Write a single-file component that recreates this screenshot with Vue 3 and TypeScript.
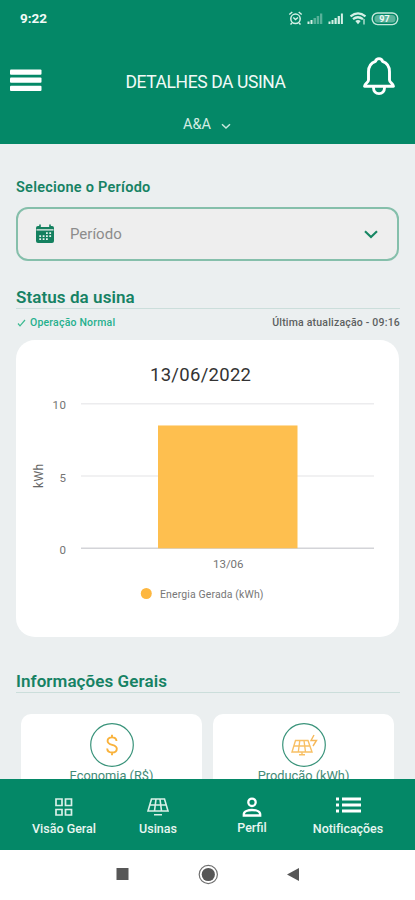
<script setup lang="ts">
interface Reading {
  label: string
  value: number
}

const reading: Reading = { label: '13/06', value: 8.5 }
const ticks: number[] = [10, 5, 0]
const plot = { left: 65, right: 358, top: 63.8, bottom: 208.3, max: 10 }

const yFor = (value: number): number =>
  plot.bottom - (value / plot.max) * (plot.bottom - plot.top)
</script>

<template>
  <div class="screen">
    <header class="header">
      <div class="status-bar">
        <span class="clock">9:22</span>
        <svg class="status-icons" width="112" height="18" viewBox="0 0 112 18">
          <g fill="none" stroke="#d5f0e6" stroke-width="1.5">
            <circle cx="7.5" cy="9.800" r="4.700" />
            <path d="M5.300 8.500 7.500 10.500 10 8.500M1.300 5.500 4.300 3M13.700 5.500 10.700 3M4 14l-1.500 1.500M11 14l1.500 1.500" />
          </g>
          <g fill="#d5f0e6">
            <path d="M19.500 12.500h2V15h-2zM22.500 11h2v4h-2z" />
            <path opacity=".4" d="M25.500 9h2.500v6h-2.500zM28.700 7h2.500v8h-2.500zM32 4.500h2.300V15H32z" />
            <path d="M40.500 12.500h2V15h-2zM43.500 11h2v4h-2zM46.500 9h2.200v6h-2.200zM49.700 7h2.200v8h-2.200zM52.900 4.500h2V15h-2z" />
          </g>
          <g fill="none" stroke="#d5f0e6" stroke-width="2.200">
            <path d="M62.500 7.300q7.500-6 15 0M65 10.200q4.800-3.900 10 0" />
            <path d="m67.300 12 2.700 3.300 2.700-3.300q-2.700-1.800-5.400 0z" fill="#d5f0e6" stroke="none" />
            <path d="M76 10v5.500" stroke-width="1.200" />
          </g>
          <rect x="84.200" y="4" width="25.500" height="11.600" rx="5.500" fill="none" stroke="#c5e8dc" stroke-width="1.400" />
          <rect x="86.500" y="6.100" width="21" height="7.400" rx="3.500" fill="#c5e8dc" opacity=".45" />
          <text x="96.500" y="13.100" class="battery">97</text>
        </svg>
      </div>
      <div class="title-row">
        <svg width="32" height="24" viewBox="0 0 32 24" fill="#fff">
          <rect y="1.500" width="31.500" height="5.200" rx="1" />
          <rect y="9.600" width="31.500" height="5.200" rx="1" />
          <rect y="17.700" width="31.500" height="5.200" rx="1" />
        </svg>
        <h1>DETALHES DA USINA</h1>
        <svg width="32" height="39" viewBox="1 0 32 40" preserveAspectRatio="none" fill="none" stroke="#fff" stroke-width="2.900" stroke-linejoin="round" stroke-linecap="round">
          <path d="M13.500 4.500a3.600 3.600 0 0 1 7 0c4.800 1.700 7 5.500 7 10.700v8.300c0 2.700 4 4.200 4 6.500H2.500c0-2.300 4-3.800 4-6.500v-8.300c0-5.200 2.200-9 7-10.700z" />
          <path d="M11.500 31.500c0 3.700 2.300 6 5.500 6s5.500-2.300 5.500-6" />
        </svg>
      </div>
      <div class="plant">
        <span>A&amp;A</span>
        <svg width="10" height="7" viewBox="0 0 10 7" fill="none" stroke="#c9e8dd" stroke-width="1.500"><path d="m1 1.300 4 3.700 4-3.700" /></svg>
      </div>
    </header>

    <main class="content">
      <h2 class="label">Selecione o Período</h2>
      <div class="field">
        <svg width="20" height="20" viewBox="0 0 20 20">
          <path fill="#14805f" d="M3 2h14q2 0 2 2v13q0 2-2 2H3q-2 0-2-2V4q0-2 2-2z" />
          <path stroke="#eee" stroke-width="1.300" d="M1.500 5.800h17M5 2.300h10" />
          <path stroke="#14805f" stroke-width="1.600" d="M5 .5v4M15 .5v4" />
          <path fill="#e6f1ed" d="M11 8.200h1.800V10H11zM14.300 8.200h1.800V10h-1.800zM4.300 11.200h1.800V13H4.300zM7.700 11.200h1.800V13H7.700zM11 11.200h1.800V13H11zM14.300 11.200h1.800V13h-1.800zM4.300 14.200h1.800V16H4.300zM7.700 14.200h1.800V16H7.700zM11 14.200h1.800V16H11z" />
        </svg>
        <span class="placeholder">Período</span>
        <svg width="14" height="9" viewBox="0 0 14 9" fill="none" stroke="#178663" stroke-width="2.100"><path d="m1 1.300 6 5.800 6-5.800" /></svg>
      </div>

      <h2 class="section status-title">Status da usina</h2>
      <div class="status-line">
        <svg width="9" height="8" viewBox="0 0 9 8" fill="none" stroke="#3cba91" stroke-width="1.200"><path d="m1 4.500 2 2.300L8 1" /></svg>
        <span class="ok">Operação Normal</span>
        <span class="updated">Última atualização - 09:16</span>
      </div>

      <svg class="chart" width="383" height="297" viewBox="0 0 383 297">
        <text class="date" x="134" y="41" textLength="101">13/06/2022</text>
        <g v-for="tick in ticks" :key="tick">
          <line :x1="plot.left" :x2="plot.right" :y1="yFor(tick)" :y2="yFor(tick)" :stroke="tick === 0 ? '#d3d4d8' : '#ececee'" stroke-width="1.500" />
          <text class="axis" x="50.500" :y="yFor(tick) + 5.500" text-anchor="end">{{ tick }}</text>
        </g>
        <text class="unit" transform="translate(26.500 148) rotate(-90)" textLength="24">kWh</text>
        <rect x="142" :y="yFor(reading.value)" width="139.500" :height="plot.bottom - yFor(reading.value)" fill="#febf4f" />
        <text class="axis" x="197" y="228" textLength="31">{{ reading.label }}</text>
        <circle cx="130.300" cy="253.500" r="5.500" fill="#fdb740" />
        <text class="legend" x="144" y="257.700" textLength="103.500">Energia Gerada (kWh)</text>
      </svg>

      <h2 class="section info-title">Informações Gerais</h2>
      <div class="cards">
        <article class="card">
          <svg width="46" height="46" viewBox="0 0 46 46" fill="none">
            <circle cx="23" cy="23" r="21.300" stroke="#39937a" stroke-width="1.200" />
            <path d="M27.500 19c-.2-2.400-1.900-3.600-4.500-3.600-2.700 0-4.400 1.400-4.400 3.600 0 5.200 9.200 2.600 9.200 7.700 0 2.400-1.900 3.800-4.700 3.800s-4.800-1.300-4.900-4M23 12.700v3M23 30.300v3" stroke="#f9b23b" stroke-width="1.900" />
          </svg>
          <span class="economy">Economia (R$)</span>
        </article>
        <article class="card">
          <svg width="46" height="46" viewBox="0 0 46 46" fill="none">
            <circle cx="23" cy="23" r="21.300" stroke="#39937a" stroke-width="1.200" />
            <path d="M14.500 18.500h12.500l4 11.500H11zM13 24h16M18.800 18.500l-1.500 11.500M23 18.500l1.500 11.500M21 30v2.500M18 32.700h6" stroke="#f8c065" stroke-width="1.400" />
            <path d="m33 13-3 5.500h5.500l-3.500 5.500" stroke="#f6b85a" stroke-width="1.400" />
          </svg>
          <span class="production">Produção (kWh)</span>
        </article>
      </div>
    </main>

    <nav class="tabs">
      <div class="tab overview">
        <svg width="20" height="20" viewBox="0 0 20 20" fill="none" stroke="#d9f0e8" stroke-width="1.700"><path d="M2 2h6v6.500H2zM11.500 2h6v6.500h-6zM2 12.500h6V18H2zM11.500 12.500h6V18h-6z" /></svg>
        <span>Visão Geral</span>
      </div>
      <div class="tab plants">
        <svg width="22" height="20" viewBox="0 0 22 20" fill="none" stroke="#d9f0e8" stroke-width="1.600"><path d="M4.500 2h13L21 14H1zM2.800 8h16.400M9 2 7.500 14M13 2l1.500 12M7 17.700h8" /></svg>
        <span>Usinas</span>
      </div>
      <div class="tab profile">
        <svg width="20" height="20" viewBox="0 0 20 20" fill="none" stroke="#fff" stroke-width="2.300"><circle cx="10" cy="5.300" r="3.700" /><path d="M1.800 18.500v-1.200c0-3 4.500-4.300 8.200-4.300s8.200 1.300 8.200 4.300v1.200z" /></svg>
        <span>Perfil</span>
      </div>
      <div class="tab alerts">
        <svg width="25" height="16" viewBox="0 0 25 16" fill="#fff"><path d="M0 .5h3v3H0zM6 .5h19v3H6zM0 6.500h3v3H0zM6 6.500h19v3H6zM0 12.500h3v3H0zM6 12.500h19v3H6z" /></svg>
        <span>Notificações</span>
      </div>
    </nav>
    <div class="system-nav">
      <svg width="186" height="22" viewBox="0 0 186 22">
        <rect x="1.500" y="4" width="12" height="12" fill="#575757" />
        <circle cx="93.300" cy="10.500" r="9.100" fill="none" stroke="#707070" stroke-width="1.200" />
        <circle cx="93.300" cy="10.500" r="6.600" fill="#555" />
        <path d="M184 4v13l-12-6.500z" fill="#575757" />
      </svg>
    </div>
  </div>
</template>

<style>
body {
  margin: 0;
  overflow: hidden;
}
</style>

<style scoped>
.screen {
  width: 415px;
  height: 900px;
  display: flex;
  flex-direction: column;
  overflow: hidden;
  background: #ebeff0;
  font-family: Roboto, "Liberation Sans", sans-serif;
  white-space: nowrap;
}
h1, h2 {
  margin: 0;
}
svg {
  display: block;
  flex: none;
}
.header {
  flex: none;
  height: 144px;
  background: #048867;
  color: #f1faf7;
}
.status-bar {
  height: 36px;
  display: flex;
  align-items: center;
  justify-content: space-between;
  box-sizing: border-box;
  padding: 0 15px 0 20px;
}
.clock {
  font-size: 13.500px;
  font-weight: 700;
}
.battery {
  font-size: 9px;
  font-weight: 700;
  fill: #f1faf7;
  text-anchor: middle;
}
.title-row {
  height: 80px;
  display: flex;
  align-items: center;
  justify-content: space-between;
  box-sizing: border-box;
  padding: 8px 20px 0 10px;
}
.title-row h1 {
  margin: 4px 0 0 6px;
  font-size: 17.500px;
  letter-spacing: -.4px;
  font-weight: 400;
}
.title-row svg:last-child {
  margin-top: -8px;
}
.plant {
  display: flex;
  align-items: center;
  gap: 10px;
  padding-left: 183px;
  font-size: 14.500px;
  line-height: 17px;
  color: #d3ece3;
}
.plant svg {
  margin-top: 3px;
}
.content {
  flex: 1;
  min-height: 0;
  overflow: hidden;
  padding: 34px 15px 0 16px;
}
.label {
  font-size: 14.500px;
  letter-spacing: .25px;
  line-height: 20px;
  font-weight: 600;
  color: #168264;
}
.field {
  height: 54px;
  width: 383px;
  box-sizing: border-box;
  margin-top: 9px;
  padding: 0 19px 0 17px;
  display: flex;
  align-items: center;
  border: 2px solid #85bfab;
  border-radius: 12px;
  background: #eee;
}
.placeholder {
  flex: 1;
  margin-left: 15px;
  font-size: 15px;
  color: #8c8c8c;
}
.section {
  height: 22px;
  line-height: 22px;
  border-bottom: 1px solid #cbdedb;
  font-size: 17px;
  letter-spacing: .08px;
  font-weight: 600;
  color: #168264;
}
.status-title {
  margin-top: 25px;
}
.status-line {
  height: 31px;
  display: flex;
  align-items: center;
  box-sizing: border-box;
  padding: 0 0 4px 1px;
  font-size: 10.500px;
  letter-spacing: .2px;
}
.ok {
  margin-left: 4px;
  color: #25b08d;
  font-weight: 500;
}
.updated {
  margin-left: auto;
  color: #5c6060;
  font-weight: 500;
}
.chart {
  background: #fff;
  border-radius: 19px;
}
.date {
  font-size: 18.500px;
  fill: #333;
}
.axis {
  font-size: 11.500px;
  letter-spacing: .5px;
  fill: #747474;
}
.unit {
  font-size: 12px;
  fill: #666;
}
.legend {
  font-size: 10.500px;
  fill: #777;
}
.info-title {
  margin-top: 33px;
}
.cards {
  display: flex;
  gap: 11px;
  padding: 21px 0 0 5px;
}
.card {
  width: 181px;
  height: 100px;
  box-sizing: border-box;
  padding-top: 8px;
  display: flex;
  flex-direction: column;
  align-items: center;
  border-radius: 10px;
  background: #fff;
  color: #438b77;
  font-size: 12.800px;
  line-height: 15px;
}
.tabs {
  flex: none;
  height: 71px;
  display: flex;
  box-sizing: border-box;
  padding-left: 17px;
  background: #048867;
  color: #e8f6f1;
  font-size: 12.500px;
  font-weight: 500;
}
.tab {
  width: 94px;
  display: flex;
  flex-direction: column;
  align-items: center;
  padding-top: 18px;
}
.tab span {
  margin-top: 4px;
  line-height: 15px;
}
.profile span {
  margin-top: 3px;
}
.alerts {
  width: 98px;
  letter-spacing: -.05px;
}
.alerts svg {
  margin-bottom: 4px;
}
.system-nav {
  flex: none;
  height: 50px;
  display: flex;
  justify-content: center;
  align-items: center;
  background: #fff;
}
</style>
